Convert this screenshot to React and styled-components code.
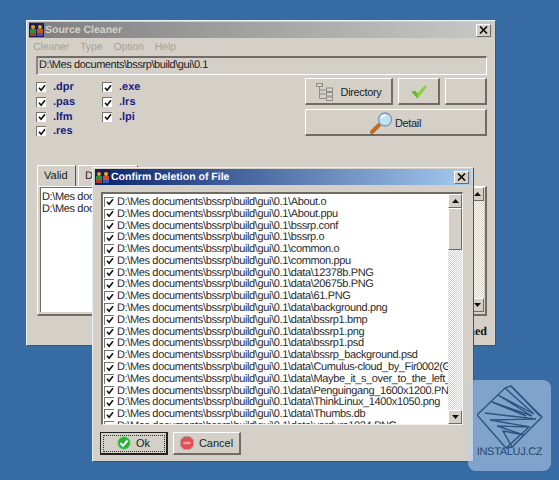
import styled, { createGlobalStyle } from "styled-components";

const Global = createGlobalStyle`
  html, body { margin: 0; padding: 0; }
  body {
    background: #376ba4;
    font-family: "Liberation Sans", Arial, sans-serif;
    text-rendering: geometricPrecision;
    overflow: hidden;
  }
`;

const bevelOut = `
  border-top: 1px solid #fff;
  border-left: 1px solid #fff;
  border-right: 2px solid #6f6c66;
  border-bottom: 2px solid #6f6c66;
`;

const Desktop = styled.div`
  position: relative;
  width: 559px;
  height: 480px;
  background: #376ba4;
  overflow: hidden;
`;
const Win = styled.div`
  position: absolute;
  left: ${(p) => p.$x}px;
  top: ${(p) => p.$y}px;
  width: ${(p) => p.$w}px;
  height: ${(p) => p.$h}px;
  box-sizing: border-box;
  display: flex;
  flex-direction: column;
  background: #d4d0c8;
  border-top: 1px solid #e8f0f4;
  border-left: 1px solid #e8f0f4;
  border-right: 1px solid #55534f;
  border-bottom: 1px solid #55534f;
  padding: 1px 2px 2px 2px;
`;
const TitleBar = styled.div`
  height: 16px;
  flex: none;
  display: flex;
  align-items: center;
  gap: 1px;
  padding: 0 2px 0 0;
  background: linear-gradient(90deg, ${(p) => p.$from}, ${(p) => p.$to});
`;
const TitleText = styled.span`
  flex: 1;
  font-size: 10.5px;
  font-weight: bold;
  color: ${(p) => p.$color};
`;
const CloseBox = styled.div`
  width: 15px;
  height: 13px;
  box-sizing: border-box;
  ${bevelOut}
  border-width: 1px;
  background: #d4d0c8;
  display: flex;
  align-items: center;
  justify-content: center;
`;
const Menu = styled.div`
  display: flex;
  gap: 11px;
  padding: 3px 0 0 4px;
  height: 17px;
  box-sizing: border-box;
  font-size: 10.5px;
  letter-spacing: -0.1px;
  color: #a5a29b;
`;
const PathBox = styled.div`
  margin: 1px 6px 0 7px;
  height: 19px;
  box-sizing: border-box;
  border-top: 2px solid #6f6c66;
  border-left: 2px solid #8a8780;
  border-bottom: 1px solid #fff;
  border-right: 1px solid #fff;
  padding: 1px 0 0 1px;
  font-size: 11px;
  letter-spacing: -0.42px;
  color: #222;
`;
const Controls = styled.div`
  display: flex;
  justify-content: space-between;
  padding: 3px 5px 0 7px;
  height: 81px;
  box-sizing: border-box;
`;
const CheckGrid = styled.div`
  display: grid;
  grid-template-rows: repeat(4, 14.7px);
  grid-auto-flow: column;
  grid-template-columns: 66px 65px;
  padding-top: 2px;
`;
const ExtItem = styled.label`
  display: flex;
  align-items: center;
  gap: 7px;
  font-size: 11px;
  font-weight: bold;
  color: #1c1c80;
`;
const Box = styled.span`
  width: 10px;
  height: 10px;
  flex: none;
  box-sizing: border-box;
  background: #fff;
  border-top: 1px solid #77746e;
  border-left: 1px solid #77746e;
  display: flex;
  align-items: center;
  justify-content: center;
`;
const Buttons = styled.div`
  display: grid;
  grid-template-columns: 88px 42px 42px;
  grid-template-rows: 27px 27px;
  gap: 4px 5px;
  margin-left: auto;
  margin-right: 1px;
`;
const Btn = styled.button`
  box-sizing: border-box;
  ${bevelOut}
  background: #d4d0c8;
  padding: 1px 0 0;
  display: flex;
  align-items: center;
  justify-content: center;
  gap: ${(p) => p.$gap || 6}px;
  font-family: inherit;
  font-size: 11px;
  letter-spacing: -0.36px;
  color: #222;
  grid-column: ${(p) => p.$span || "auto"};
`;
const TabsArea = styled.div`
  flex: 1;
  display: flex;
  flex-direction: column;
  padding: 9px 6px 0 8px;
`;
const TabRow = styled.div`
  display: flex;
  height: 21px;
  flex: none;
  font-size: 11px;
  color: #222;
`;
const Tab = styled.div`
  width: ${(p) => p.$w}px;
  box-sizing: border-box;
  padding: 4px 0 0 6px;
  margin-right: 2px;
  border-top: 1px solid #fff;
  border-left: 1px solid #fff;
  border-right: 1px solid #55534f;
  overflow: hidden;
  white-space: nowrap;
`;
const TabPanel = styled.div`
  height: 130px;
  flex: none;
  box-sizing: border-box;
  border-top: 1px solid #fff;
  border-left: 1px solid #fff;
  border-right: 2px solid #6f6c66;
  border-bottom: 2px solid #6f6c66;
  padding: 0 1px 2px 2px;
  display: flex;
`;
const ValidList = styled.div`
  flex: 1;
  background: #fff;
  border-top: 1px solid #6f6c66;
  border-left: 1px solid #6f6c66;
  padding: 4px 0 0 1px;
  font-size: 11px;
  letter-spacing: -0.36px;
  line-height: 11.8px;
  color: #222;
  white-space: nowrap;
`;
const Status = styled.div`
  font-size: 12px;
  font-family: "Liberation Serif", serif;
  font-weight: bold;
  color: #111;
  text-align: right;
  padding-top: 8px;
`;
const DialogBody = styled.div`
  flex: 1;
  display: flex;
  flex-direction: column;
  padding: 7px 8px 0 6px;
  min-height: 0;
`;
const FileFrame = styled.div`
  height: 233px;
  flex: none;
  box-sizing: border-box;
  display: flex;
  background: #fff;
  border-top: 2px solid #6f6c66;
  border-left: 2px solid #6f6c66;
  border-right: 1px solid #f4f2ee;
  border-bottom: 1px solid #f4f2ee;
  overflow: hidden;
`;
const FileList = styled.div`
  flex: 1;
  min-width: 0;
  padding: 2px 0 0 1px;
  overflow: hidden;
`;
const FileRow = styled.div`
  height: 11.8px;
  display: flex;
  align-items: center;
  gap: 3px;
  font-size: 11px;
  letter-spacing: -0.36px;
  color: #2a2a2a;
  white-space: nowrap;
`;
const Scroll = styled.div`
  width: ${(p) => p.$w}px;
  flex: none;
  display: flex;
  flex-direction: column;
  justify-content: space-between;
  background-color: #ecebe6;
  background-image: repeating-conic-gradient(#d4d0c8 0 25%, #fff 0 50%);
  background-size: 2px 2px;
`;
const Arrow = styled.div`
  height: 14px;
  flex: none;
  box-sizing: border-box;
  ${bevelOut}
  border-width: 1px;
  background: #d4d0c8;
  display: flex;
  align-items: center;
  justify-content: center;
`;
const Thumb = styled.div`
  height: 42px;
  box-sizing: border-box;
  ${bevelOut}
  border-width: 1px;
  background: #d4d0c8;
  margin-bottom: auto;
`;
const DialogButtons = styled.div`
  display: flex;
  gap: 5px;
  padding: 7px 0 0 1px;
  margin-left: -2px;
`;
const DlgBtn = styled.button`
  width: 68px;
  height: 23px;
  box-sizing: border-box;
  padding: 0;
  background: #d4d0c8;
  display: flex;
  align-items: center;
  justify-content: center;
  gap: 5px;
  font-family: inherit;
  font-size: 11px;
  color: #222;
  ${(p) => (p.$focus ? "border: 1px solid #222; border-right-width: 2px; border-bottom-width: 2px; outline: 1px dotted #333; outline-offset: -4px;" : bevelOut)}
`;
const Watermark = styled.div`
  position: absolute;
  left: 468px;
  top: 380px;
  width: 83px;
  height: 91px;
  border-radius: 8px;
  background: rgba(190, 210, 235, 0.55);
  display: flex;
  flex-direction: column;
  align-items: center;
  padding-top: 4px;
  box-sizing: border-box;
  color: #25476f;
  font-size: 11px;
  letter-spacing: -0.3px;
`;
const WatermarkName = styled.span`
  margin-top: -3px;
`;

const AppLogo = () => (
  <svg width="15" height="14" viewBox="0 0 15 14">
    <rect width="15" height="14" fill="#1c1c50" />
    <rect x="2" y="2" width="4" height="4" rx="2" fill="#d9a12b" />
    <rect x="9" y="2" width="4" height="4" rx="2" fill="#e0b030" />
    <rect x="1" y="6" width="6" height="4" fill="#2e8f3a" />
    <rect x="8" y="6" width="6" height="4" fill="#c9502a" />
    <rect x="1" y="10" width="6" height="3" fill="#b13a2c" />
    <rect x="8" y="10" width="6" height="3" fill="#3a58b0" />
  </svg>
);
const CloseIcon = () => (
  <svg width="9" height="8" viewBox="0 0 9 8">
    <path d="M1 0.5L8 7.5M8 0.5L1 7.5" stroke="#111" strokeWidth="1.7" />
  </svg>
);
const Tick = () => (
  <svg width="8" height="8" viewBox="0 0 8 8">
    <path d="M1 3.8L3.1 6.2L7 1.2" fill="none" stroke="#111" strokeWidth="1.6" />
  </svg>
);
const TreeIcon = () => (
  <svg width="18" height="18" viewBox="0 0 18 18" fill="#d8d5ce" stroke="#8f8d87">
    <rect x="0.5" y="0.5" width="6" height="3" />
    <path d="M3.5 3.5V15.5H10M3.5 7H10M3.5 11H10" fill="none" />
    <rect x="10.5" y="5" width="6" height="3.5" />
    <rect x="10.5" y="9.5" width="6" height="3.5" />
    <rect x="10.5" y="14" width="6" height="3.5" />
  </svg>
);
const GreenCheck = () => (
  <svg width="16" height="14" viewBox="0 0 16 14">
    <path d="M0.5 7L4 5.5L6.5 8.5L14 0.5L15.5 2L6.5 13.5Z" fill="#6bb52c" />
    <path d="M6.5 8.5L14 0.5L15.5 2L6.5 13.5Z" fill="#8fd043" />
  </svg>
);
const Magnifier = () => (
  <svg width="24" height="22" viewBox="0 0 24 22">
    <path d="M2 20L9 13" stroke="#c06a22" strokeWidth="4" strokeLinecap="round" />
    <circle cx="15" cy="7.5" r="6.5" fill="#bfe3f2" stroke="#7f97b5" strokeWidth="1.3" />
    <path d="M11 6C12 4 14 3 16 3" stroke="#fff" strokeWidth="1.5" fill="none" />
  </svg>
);
const OkIcon = () => (
  <svg width="14" height="14" viewBox="0 0 14 14">
    <circle cx="7" cy="7" r="6.5" fill="#2fae3c" stroke="#8fe79a" />
    <path d="M3.5 7L6 9.8L10.5 4.5" fill="none" stroke="#fff" strokeWidth="2" />
  </svg>
);
const CancelIcon = () => (
  <svg width="14" height="14" viewBox="0 0 14 14">
    <path d="M4 0.5H10L13.5 4V10L10 13.5H4L0.5 10V4Z" fill="#e0505a" stroke="#b9a09a" />
    <rect x="3.5" y="5.8" width="7" height="2.4" fill="#f2a0a0" />
  </svg>
);
const UpArrow = () => (
  <svg width="7" height="4" viewBox="0 0 7 4"><path d="M3.5 0L7 4H0Z" fill="#111" /></svg>
);
const DownArrow = () => (
  <svg width="7" height="4" viewBox="0 0 7 4"><path d="M0 0H7L3.5 4Z" fill="#111" /></svg>
);
const InstalujLogo = () => (
  <svg width="66" height="65" viewBox="11 6 66 65" fill="none" stroke="#2c5482" strokeWidth="1.4">
    <path d="M11 37L39 10L45 8L76 39L46 69L40 70Z" />
    <path d="M39 10L68 36L32 17L66 38L26 24L60 38" />
    <path d="M45 8L74 38" />
    <path d="M19 35L70 41L24 42L64 49L31 48L58 57L37 53L46 69" />
    <path d="M40 70L62 50" />
  </svg>
);

const EXT = [".dpr", ".pas", ".lfm", ".res", ".exe", ".lrs", ".lpi"];
const BASE = "D:\\Mes documents\\bssrp\\build\\gui\\0.1\\";
const FILES = [
  "About.o",
  "About.ppu",
  "bssrp.conf",
  "bssrp.o",
  "common.o",
  "common.ppu",
  "data\\12378b.PNG",
  "data\\20675b.PNG",
  "data\\61.PNG",
  "data\\background.png",
  "data\\bssrp1.bmp",
  "data\\bssrp1.png",
  "data\\bssrp1.psd",
  "data\\bssrp_background.psd",
  "data\\Cumulus-cloud_by_Fir0002(Gno",
  "data\\Maybe_it_s_over_to_the_left_",
  "data\\Penguingang_1600x1200.PNG",
  "data\\ThinkLinux_1400x1050.png",
  "data\\Thumbs.db",
  "data\\verdure1024.PNG",
];

export default function App() {
  return (
    <Desktop>
      <Global />
      <Win $x={26} $y={20} $w={470} $h={326}>
        <TitleBar $from="#7f7f7f" $to="#c8c8c6">
          <AppLogo />
          <TitleText $color="#d4d0c8">Source Cleaner</TitleText>
          <CloseBox><CloseIcon /></CloseBox>
        </TitleBar>
        <Menu>
          <span>Cleaner</span>
          <span>Type</span>
          <span>Option</span>
          <span>Help</span>
        </Menu>
        <PathBox>D:\Mes documents\bssrp\build\gui\0.1</PathBox>
        <Controls>
          <CheckGrid>
            {EXT.map((e) => (
              <ExtItem key={e}>
                <Box><Tick /></Box>
                {e}
              </ExtItem>
            ))}
          </CheckGrid>
          <Buttons>
            <Btn $gap={7}><TreeIcon />Directory</Btn>
            <Btn><GreenCheck /></Btn>
            <Btn />
            <Btn $span="1 / -1" $gap={1}><Magnifier />Detail</Btn>
          </Buttons>
        </Controls>
        <TabsArea>
          <TabRow>
            <Tab $w={39}>Valid</Tab>
            <Tab $w={60}>Deleted</Tab>
          </TabRow>
          <TabPanel>
            <ValidList>
              <div>{BASE}About.o</div>
              <div>{BASE}bssrp.o</div>
            </ValidList>
            <Scroll $w={14}>
              <Arrow><UpArrow /></Arrow>
              <Arrow><DownArrow /></Arrow>
            </Scroll>
          </TabPanel>
          <Status>Finished</Status>
        </TabsArea>
      </Win>

      <Win $x={92} $y={167} $w={382} $h={295}>
        <TitleBar $from="#0a246a" $to="#a6caf0">
          <AppLogo />
          <TitleText $color="#fff">Confirm Deletion of File</TitleText>
          <CloseBox><CloseIcon /></CloseBox>
        </TitleBar>
        <DialogBody>
          <FileFrame>
            <FileList>
              {FILES.map((f) => (
                <FileRow key={f}>
                  <Box><Tick /></Box>
                  {BASE + f}
                </FileRow>
              ))}
            </FileList>
            <Scroll $w={14}>
              <Arrow><UpArrow /></Arrow>
              <Thumb />
              <Arrow><DownArrow /></Arrow>
            </Scroll>
          </FileFrame>
          <DialogButtons>
            <DlgBtn $focus><OkIcon />Ok</DlgBtn>
            <DlgBtn><CancelIcon />Cancel</DlgBtn>
          </DialogButtons>
        </DialogBody>
      </Win>

      <Watermark>
        <InstalujLogo />
        <WatermarkName>INSTALUJ.CZ</WatermarkName>
      </Watermark>
    </Desktop>
  );
}
